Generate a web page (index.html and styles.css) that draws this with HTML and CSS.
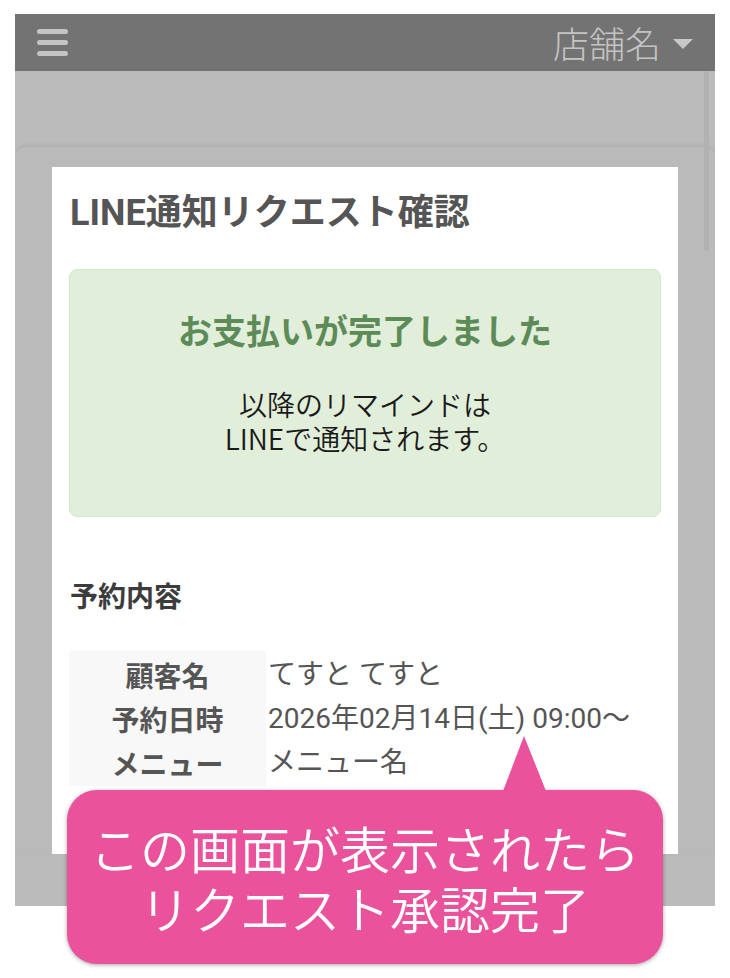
FILE: index.html
```html
<!DOCTYPE html>
<html lang="ja">
<head>
<meta charset="utf-8">
<title>LINE通知リクエスト確認</title>
<link rel="stylesheet" href="styles.css">
</head>
<body>
<div class="page">
  <div class="screen">
    <header class="topbar">
      <span class="burger"><i></i><i></i><i></i></span>
      <span class="shop">店舗名<span class="caret"></span></span>
    </header>
    <div class="scrollbar"></div>
    <div class="modal">
      <div class="panel">
        <h1 class="title">LINE通知リクエスト確認</h1>
        <div class="alert">
          <h2 class="alert-title">お支払いが完了しました</h2>
          <p class="alert-text">以降のリマインドは<br>LINEで通知されます。</p>
        </div>
        <h3 class="section">予約内容</h3>
        <table class="info">
          <tr><th>顧客名</th><td>てすと てすと</td></tr>
          <tr><th>予約日時</th><td>2026年02月14日(土) 09:00〜</td></tr>
          <tr><th>メニュー</th><td>メニュー名</td></tr>
        </table>
      </div>
    </div>
  </div>
  <div class="callout">この画面が表示されたら<br>リクエスト承認完了</div>
</div>
</body>
</html>
```
FILE: styles.css
```css
html, body {
  margin: 0;
  padding: 0;
  background: #ffffff;
}
body {
  font-family: Roboto, "Noto Sans CJK JP", sans-serif;
  width: 730px;
  height: 978px;
  overflow: hidden;
}
.page {
  position: relative;
  padding: 14px 15px 0;
}
.screen {
  position: relative;
  width: 700px;
  height: 892px;
  background: #bbbbbb;
  overflow: hidden;
}
.topbar {
  height: 57px;
  background: #737373;
  display: flex;
  align-items: center;
  justify-content: space-between;
  padding: 0 22px 0 22px;
  box-sizing: border-box;
}
.burger {
  display: flex;
  flex-direction: column;
  gap: 6px;
  width: 31px;
  margin-top: -1px;
}
.burger i {
  display: block;
  height: 5px;
  border-radius: 3px;
  background: #c4c4c4;
}
.shop {
  display: flex;
  align-items: center;
  font-family: "Noto Sans CJK JP", sans-serif;
  font-size: 36px;
  line-height: 42px;
  color: #c4c4c4;
  font-weight: 300;
  margin-top: -2px;
}
.caret {
  width: 0;
  height: 0;
  margin-left: 12px;
  margin-top: 4px;
  border-left: 10px solid transparent;
  border-right: 10px solid transparent;
  border-top: 10px solid #c8c8c8;
}
.scrollbar {
  position: absolute;
  left: 689px;
  top: 57px;
  width: 5px;
  height: 180px;
  background: #b1b1b1;
  border-radius: 2px;
}
.modal {
  margin-top: 76px;
  padding: 20px 37px 0;
  border-radius: 10px 10px 0 0;
  background: #bababa;
  box-shadow: 0 -2px 5px rgba(0, 0, 0, 0.07);
}
.panel {
  background: #ffffff;
  height: 687px;
  padding: 20px 17px 0;
  box-sizing: border-box;
}
.title {
  margin: 4px 0 0 1px;
  font-size: 36px;
  line-height: 44px;
  font-weight: 700;
  color: #555555;
  white-space: nowrap;
}
.alert {
  margin-top: 34px;
  height: 248px;
  box-sizing: border-box;
  background: #e1eeda;
  border: 1.5px solid #d5e8c9;
  border-radius: 8px;
  text-align: center;
  padding-top: 36px;
}
.alert-title {
  margin: 0;
  font-family: "Noto Sans CJK JP", sans-serif;
  font-size: 34px;
  line-height: 48px;
  font-weight: 700;
  color: #5d8b58;
}
.alert-text {
  margin: 33px 0 0;
  font-family: "Noto Sans CJK JP", sans-serif;
  font-size: 28px;
  line-height: 34px;
  font-weight: 350;
  color: #1a1a1a;
}
.section {
  margin: 58px 0 0 1px;
  font-family: "Noto Sans CJK JP", sans-serif;
  font-size: 28px;
  line-height: 40px;
  font-weight: 700;
  color: #3c3c3c;
}
.info {
  margin-top: 36px;
  border-collapse: collapse;
  font-size: 28px;
  color: #555555;
}
.info th {
  width: 197px;
  background: #f8f8f8;
  font-family: "Noto Sans CJK JP", sans-serif;
  font-weight: 700;
  text-align: center;
  padding: 0;
  height: 44px;
  line-height: 44px;
}
.info tr:first-child th { height: 46px; vertical-align: bottom; }
.info tr:last-child th { height: 45px; vertical-align: top; }
.info td {
  padding: 0 0 0 2px;
  font-weight: 400;
  white-space: nowrap;
  line-height: 44px;
}
.info tr:first-child td { vertical-align: bottom; }
.info tr:last-child td { vertical-align: top; }
.callout {
  position: absolute;
  left: 67px;
  top: 790px;
  width: 596px;
  height: 174px;
  box-sizing: border-box;
  background: #ea539b;
  border-radius: 30px;
  box-shadow: 0 1px 4px rgba(0, 0, 0, 0.35);
  color: #ffffff;
  font-family: "Noto Sans CJK JP", sans-serif;
  font-size: 50px;
  line-height: 60px;
  font-weight: 350;
  text-align: center;
  display: flex;
  align-items: center;
  justify-content: center;
}
.callout::before {
  content: "";
  position: absolute;
  left: 436px;
  top: -54px;
  width: 0;
  height: 0;
  border-left: 21px solid transparent;
  border-right: 22px solid transparent;
  border-bottom: 55px solid #ea539b;
}
```
